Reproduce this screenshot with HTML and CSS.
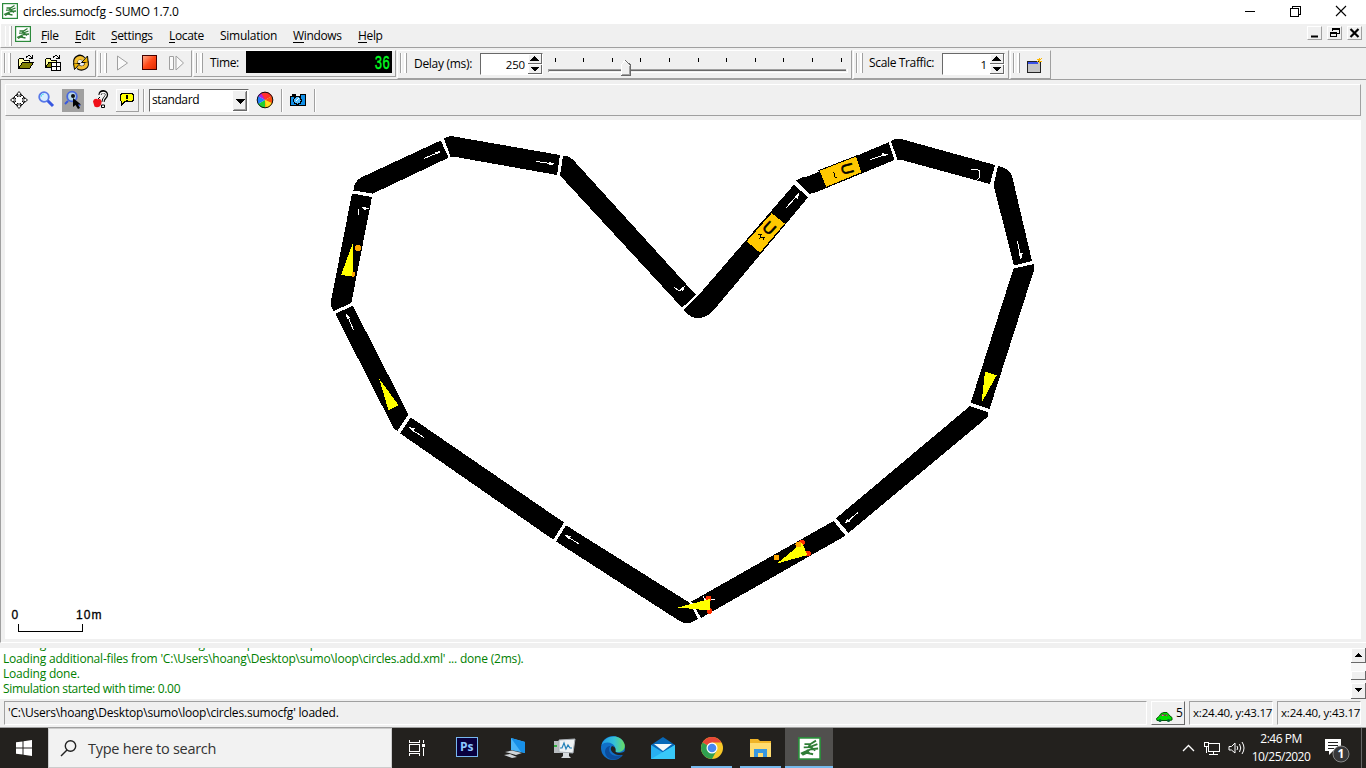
FILE: index.html
```html
<!DOCTYPE html>
<html lang="en">
<head>
<meta charset="utf-8">
<title>circles.sumocfg - SUMO 1.7.0</title>
<link rel="stylesheet" href="styles.css">
</head>
<body>
<svg class="defs" width="0" height="0">
  <symbol id="sumo" viewBox="0 0 16 16">
    <rect x=".6" y=".6" width="14.8" height="14.8" fill="#fff" stroke="#2c8a3c" stroke-width="1.2"/>
    <path d="M12.500 2.500 8.500 5H4.500M13.500 5 8 7 4 7.200M8.500 5 7 7.500M14 8 9 8.500 2 11.500M9 7 12 9.500M3 12.500 6 11 10.500 12M6 9 8 11.500" fill="none" stroke="#2f7d36" stroke-width="1.300"/>
  </symbol>
</svg>

<header class="titlebar">
  <svg class="app-icon" width="16" height="16"><use href="#sumo"/></svg>
  <span class="t title">circles.sumocfg - SUMO 1.7.0</span>
  <svg class="window-buttons" width="110" height="12" fill="none" stroke="#000" shape-rendering="crispEdges">
    <path d="M1 6.500H11M46.500 3.500H54.500V11.500H46.500ZM48.500 3V1.500H56.500V9.500H55"/>
    <path d="M92 1 102 11M102 1 92 11" shape-rendering="auto" stroke-width="1.100"/>
  </svg>
</header>

<nav class="menubar">
  <i class="grip"></i>
  <svg class="app-icon" width="16" height="16"><use href="#sumo"/></svg>
  <span class="t m-file"><u>F</u>ile</span>
  <span class="t m-edit"><u>E</u>dit</span>
  <span class="t m-settings"><u>S</u>ettings</span>
  <span class="t m-locate"><u>L</u>ocate</span>
  <span class="t m-simulation">Simulation</span>
  <span class="t m-windows"><u>W</u>indows</span>
  <span class="t m-help"><u>H</u>elp</span>
  <div class="mdi-buttons">
    <svg width="15" height="14"><path d="M3 9.500H10" stroke="#000" stroke-width="2"/></svg>
    <svg width="15" height="14" fill="none" stroke="#000" shape-rendering="crispEdges"><path d="M2.500 5.500H8.500V9.500H2.500ZM2 6.500H9M4.500 4V1.500H11.500V6.500H9M4 2.500H12"/></svg>
    <svg width="15" height="14"><path d="M2.500 2 10.500 10M10.500 2 2.500 10" stroke="#000" stroke-width="2.200"/></svg>
  </div>
</nav>

<div class="toolbars">
  <section class="bar bar-file">
    <i class="grip"></i>
    <svg width="18" height="18" class="ic1" shape-rendering="crispEdges">
      <path d="M1.500 14.500V5.500L3 4.500H6L7.500 6.500H12.500V8.500" fill="#ffffa0" stroke="#000"/><path d="M1.500 14.500 5.500 8.500H16.500L12.500 14.500Z" fill="#808000" stroke="#000"/><path d="M9 3.500C11 1 13 1 14.500 4M15 1V4.500H12" fill="none" stroke="#000"/>
    </svg>
    <svg width="18" height="18" class="ic2" shape-rendering="crispEdges">
      <path d="M1.500 13.500V5.500L3 4.500H6L7.500 6.500H12.500V8.500" fill="#ffffa0" stroke="#000"/><path d="M1.500 13.500 5 8.500H14L11 13.500Z" fill="#808000" stroke="#000"/><path d="M9 3.500C11 1 13 1 14.500 4M15 1V4.500H12" fill="none" stroke="#000"/><path d="M7.500 8.500H16.500V16.500H7.500ZM7.500 12.500H16.500M12.500 8.500V16.500" fill="#fff" stroke="#000"/>
    </svg>
    <svg width="18" height="18" class="ic3">
      <path d="M4 10C2 4 8 1 11.500 5M14 8c2 5-4 8-8 5" fill="none" stroke="#000" stroke-width="4.800"/><path d="M9.500 8.500H16.200L15.500 2ZM8 9.500H1.500L2.500 15.500Z" fill="#f0b400" stroke="#000"/><path d="M4 9.500C3 4.500 8 2 11.500 5.200M14 8.500c1.500 4.500-4 7-8 4.200" fill="none" stroke="#f5c030" stroke-width="3.300"/>
    </svg>
  </section>
  <section class="bar bar-run">
    <i class="grip"></i>
    <svg width="80" height="18" fill="none" stroke="#a0a0a0">
      <path d="M6.500 2V16L16.500 9ZM58.500 2.500H62.500V15.500H58.500ZM65 2V16L72.500 9Z" fill="#fafafa"/>
      <defs><linearGradient id="stop" x2="1" y2="1"><stop stop-color="#ffb090"/><stop offset=".5" stop-color="#ff4818"/><stop offset="1" stop-color="#e02800"/></linearGradient></defs>
      <rect x="31.500" y="1.500" width="14" height="14" fill="url(#stop)" stroke="#400"/>
    </svg>
  </section>
  <section class="bar bar-time">
    <i class="grip"></i><span class="t l-time">Time:</span>
    <svg class="lcd" width="146" height="22"><text x="128.500" y="17.500" textLength="15.500" lengthAdjust="spacingAndGlyphs">36</text></svg>
  </section>
  <section class="bar bar-delay tall">
    <i class="grip"></i><span class="t l-delay">Delay (ms):</span>
    <div class="spinner s-delay"><span class="t">250</span><svg width="14" height="20"><use href="#spin"/></svg></div>
    <svg class="slider" width="300" height="24" shape-rendering="crispEdges">
      <path d="M7.500 3V7M35.500 3V7M64.500 3V7M92.500 3V7M121.500 3V7M150.500 3V7M178.500 3V7M207.500 3V7M235.500 3V7M264.500 3V7M293.500 3V7" stroke="#000"/>
      <path d="M0 16.500V14.500H298" stroke="#a0a0a0" fill="none"/><path d="M1 15.500H298" stroke="#696969"/><path d="M1 17.500H299V14" stroke="#fff" fill="none"/>
      <path d="M73.500 20.500V9.500L77 5.500 82.500 10.500V20.500Z" fill="#f0f0f0" stroke="#fff"/><path d="M73 20.500H82.500V10L77 5" fill="none" stroke="#696969"/><path d="M74 19.500H81.500V11" fill="none" stroke="#a0a0a0"/>
    </svg>
  </section>
  <section class="bar bar-scale tall">
    <i class="grip"></i><span class="t l-scale">Scale Traffic:</span>
    <div class="spinner s-scale"><span class="t">1</span><svg width="14" height="20">
      <g id="spin" shape-rendering="crispEdges"><rect width="14" height="20" fill="#f0f0f0"/><path d="M0 9.500H13.500V0M0 19.500H13.500V11" stroke="#696969" fill="none"/><path d="M.5 9V.5H13M.5 19V10.500H13" stroke="#fff" fill="none"/><path d="M2 6.500 6.500 2 11 6.500ZM2 13 6.500 17.500 11 13Z"/></g></svg></div>
  </section>
  <section class="bar bar-view tall">
    <i class="grip"></i>
    <svg width="18" height="18" shape-rendering="crispEdges"><rect x="1.500" y="4.500" width="13" height="11" fill="#c4c4c4" stroke="#222"/><path d="M2 6H12" stroke="#3850e8" stroke-width="2"/><path d="M11 5 16 1M13.500 1V6M11 2 16 5" stroke="#ffb800"/></svg>
  </section>
</div>

<main class="mdi">
  <div class="viewbar">
    <svg width="20" height="20" class="v1" viewBox="0 0 20 20"><path d="M10 1.500 12.500 4.500H11V7L13 5 15 7 13 9H15.500V7.500L18.500 10 15.500 12.500V11H13L15 13 13 15 11 13V15.500H12.500L10 18.500 7.500 15.500H9V13L7 15 5 13 7 11H4.500V12.500L1.500 10 4.500 7.500V9H7L5 7 7 5 9 7V4.500H7.500Z" fill="#fff" stroke="#000" stroke-width=".9"/></svg>
    <svg width="20" height="20" class="v2"><path d="M10 10 16 16" stroke="#3858e0" stroke-width="3"/><circle cx="7" cy="7" r="4.800" fill="#d8ecff" stroke="#5878e8" stroke-width="1.800"/><path d="M4 7A3 3 0 0 1 7 4" stroke="#55dff0" fill="none"/></svg>
    <svg width="22" height="23" class="v3"><rect width="22" height="23" fill="#a0a0a0"/><path d="M6 12 3 15M14 13 18 17" stroke="#3858e0" stroke-width="2"/><circle cx="10" cy="7.500" r="4.800" fill="#b8d8e8" stroke="#4868e0" stroke-width="1.800"/><circle cx="11" cy="7" r="2" fill="#111"/><path d="M11 9V18L13.500 16 16 20 18 19 16 15.500H19Z"/></svg>
    <svg width="20" height="20" class="v4"><path d="M8 5C8 0 15 1 14.500 5 14.500 8 11 8 11 12" fill="none" stroke="#000" stroke-width="3.200"/><path d="M8 5C8.500 1.500 14.500 1.500 14.200 5 13.500 8 11 8 11 12" fill="none" stroke="#fff" stroke-width="1.200"/><path d="M1 11.500C2 8 5 8.500 6 9.500 8 8 10 10 9.500 13 9 17 5 18 2.500 16.500Z" fill="#f01018"/><path d="M6 9 8 7M9.500 15H12.500V17.500H9.500Z" stroke="#000" fill="#fff"/></svg>
    <svg width="23" height="23" class="v5" shape-rendering="crispEdges"><path d="M.5 22V.5H22" fill="none" stroke="#fff"/><path d="M0 22.500H22.500V0" fill="none" stroke="#a0a0a0"/><path d="M6 4.500H16L17.500 6V11L16 12.500H9L5.500 16V12.500L4.500 11V6Z" fill="#ff0" stroke="#000"/><path d="M11 6V9.500M11 10.500V12" stroke="#000" stroke-width="2"/></svg>
    <i class="sep"></i>
    <div class="combo"><span class="t">standard</span><svg width="14" height="20" shape-rendering="crispEdges"><rect width="14" height="20" fill="#f0f0f0"/><path d="M0 19.500H13.500V0" fill="none" stroke="#696969"/><path d="M1 18.500H12.500V1" fill="none" stroke="#a0a0a0"/><path d="M2 8H12L7 13Z"/></svg></div>
    <svg width="18" height="18" class="wheel" viewBox="-9 -9 18 18"><path d="M0 0V-8A8 8 0 0 1 7 -4Z" fill="#ff3020"/><path d="M0 0 7-4A8 8 0 0 1 7 4Z" fill="#f85010"/><path d="M0 0 7 4A8 8 0 0 1 0 8Z" fill="#ffb010"/><path d="M0 0V8A8 8 0 0 1-7 4Z" fill="#20d030"/><path d="M0 0-7 4A8 8 0 0 1-7-4Z" fill="#2080ff"/><path d="M0 0-7-4A8 8 0 0 1 0-8Z" fill="#b020e0"/><path d="M0 0-4-7A8 8 0 0 1 4-7Z" fill="#ff3030"/><path d="M0 0 7 3A8 8 0 0 1 2 8Z" fill="#ffe020"/><circle r="7.800" fill="none" stroke="#111"/></svg>
    <i class="sep s2"></i>
    <svg width="18" height="16" class="camera" shape-rendering="crispEdges"><path d="M1.500 4.500H11.500V2.500H16.500V13.500H1.500Z" fill="#1090e8" stroke="#000"/><rect x="3" y="2" width="4" height="2"/><circle cx="8.500" cy="8.500" r="3.800" fill="#58c0ff" stroke="#000" stroke-width="1.300"/><path d="M7 9 10 6" stroke="#fff"/></svg>
    <i class="sep s3"></i>
  </div>
  <svg class="canvas" width="1356" height="519" viewBox="5 120 1356 519" shape-rendering="crispEdges">
    <g class="roads">
      <path d="M352 193.500 372 197 351.300 303 333.700 311 330.500 305 331 301Z"/>
      <path d="M353.500 190.500 354.500 185 357.500 180 361.500 177.300 440.700 140.500 448.500 157.700 372.700 193.700Z"/>
      <path d="M444 138.500 449.500 136.200 454 136.500 560 155 557 175 454 156.700 450.700 157.500Z"/>
      <path d="M563 156H567.500L572.700 159.300 696 295 682 307.700 560 175.500Z"/>
      <path d="M697 297 794 184.500 808 197.500 713 311Q697 326 683.300 310Z"/>
      <path d="M795.700 180.700 801.500 177.500 807 176.700 888.500 142.300 894.500 160 815 192.700 809 194Z"/>
      <path d="M890.700 141 895 139 903 139.500 995 165 990 184 900 159.500 897.500 159.500Z"/>
      <path d="M998 166Q1011 168 1013 180L1032 261 1014 265.500 993.500 185Z"/>
      <path d="M1034 264 1034.500 268.500 989.500 409 970.700 402.700 1013.500 268.500Z"/>
      <path d="M970 406 988.500 412.500 987.500 417 848.500 533 836 518.300Z"/>
      <path d="M833.500 521 845.500 535.700 701 618 691.500 601.500Z"/>
      <path d="M690 603 698 618.500Q688 627 678 620L556 541.500 566 525.300Z"/>
      <path d="M410.700 417.300 564 522.500 553.300 539.700 400 433.300Z"/>
      <path d="M335.300 314 352.700 305.500 408.500 414.500 397.700 430.700 394 429Z"/>
    </g>
    <g class="heads">
      <path d="M434.500 152.500 439 151 441 151.700 437 154Z"/>
      <path d="M549 162 555 164 549 165.500Z"/>
      <path d="M362 207.500 364 206.800 369 208.500 364 210Z"/>
      <path d="M680 289 685 286 683 291Z"/>
      <path d="M794 197 799 193 798 199Z"/>
      <path d="M882 153 888 154.500 883 156.500Z"/>
      <path d="M1018.500 253 1022.500 253.500 1021 260Z"/>
      <path d="M845 523 847 519 851 521Z"/>
      <path d="M564 535 571 536 569 539.500Z"/>
      <path d="M409 427 415 428.500 413 432Z"/>
      <path d="M345.500 313 350 317.500 347 319.500Z"/>
    </g>
    <g class="shafts">
      <path d="M424 158.500 436 153.500M536 161.500 550 163.500M358.500 215V208.500M674 287 679 291 682 289M786 208 796 197M870 159.500 883 155.500M971 169.500H977.500L980 171 979 178 977 180M1017.500 241 1020 254M848 521 858 512.500M579 544 568 537M424 437.500 412 430M353.500 330 348.500 318M703 596 705 600 715 599"/>
    </g>
    <g class="stops">
      <path d="M771.700 212.500 785.300 223.500 760 253.300 746 241.500Z"/>
      <path d="M819 170.500 856.500 156 862 172.500 826 187.500Z"/>
      <text transform="translate(765.500 232) rotate(42)" text-anchor="middle">U</text>
      <text transform="translate(842 170) rotate(76)" text-anchor="middle">U</text>
      <path class="mark" d="M758 235 761 234.500 760 238 764 237.500 763 240M833 172 835 174 834 176 836.500 178"/>
    </g>
    <g fill="#ff3000"><circle cx="802" cy="542.500" r="3"/><circle cx="808" cy="553.500" r="3"/><circle cx="708.500" cy="598.500" r="3"/><circle cx="709.500" cy="611" r="3"/></g>
    <g fill="#ff0"><path d="M352.500 244V276.500L341 275ZM379.300 379 398.500 405 388.500 410.500ZM985 371.500 996.500 375.500 981.500 403ZM777 563.500 802 543 807.500 555ZM678 607.500 709.500 599V610.500Z"/></g>
    <g fill="#ffa800"><circle cx="358" cy="248" r="3"/><path d="M352 271.500 355 272V276L352 277Z"/><circle cx="776.500" cy="557.500" r="2.800"/><circle cx="798.500" cy="544.500" r="3"/></g>
    <path d="M18.500 624V631.500H82.500V624" fill="none" stroke="#000"/>
    <text class="scale" x="11.500" y="619">0</text><text class="scale" x="76" y="619" textLength="25.500">10m</text>
  </svg>
</main>

<section class="log">
  <div class="log-text">
    <p class="t l0">Loading net-file from 'C:\Users\hoang\Desktop\sumo\loop\'</p>
    <p class="t l1">Loading additional-files from 'C:\Users\hoang\Desktop\sumo\loop\circles.add.xml' ... done (2ms).</p>
    <p class="t">Loading done.</p>
    <p class="t l3">Simulation started with time: 0.00</p>
  </div>
  <svg width="15" height="51" shape-rendering="crispEdges"><rect width="15" height="51" fill="#f7f7f7"/><g fill="#f0f0f0" stroke="#fff"><path d="M.5.500H14.500V14.500H.5ZM.5 23.500H14.500V31.500H.5ZM.5 35.500H14.500V50.500H.5Z"/></g><path d="M0 14.500H14.500V0M0 31.500H14.500V23M0 50.500H14.500V35" fill="none" stroke="#696969"/><path d="M3 9 7 5 11 9ZM3 40H11L7 44Z"/></svg>
</section>

<footer class="status">
  <div class="field"><span class="t l-status">'C:\Users\hoang\Desktop\sumo\loop\circles.sumocfg' loaded.</span></div>
  <div class="cars"><svg width="17" height="12"><path d="M.5 7.500 3 5.500 5 2.500 8 1.500H11L14 5 16 6.500V9L13 9.500H1Z" fill="#00e000" stroke="#005800"/><path d="M5 5 6.500 3.500H8V5M9.500 5V3.500L12 5" fill="#f070a0" stroke="#702040" stroke-width=".7"/><circle cx="4" cy="9.500" r="1.500" fill="#063"/><circle cx="12.500" cy="9.500" r="1.500" fill="#063"/></svg><span class="t">5</span></div>
  <div class="coord"><span class="t l-coord">x:24.40, y:43.17</span></div>
  <div class="coord c2"><span class="t l-coord">x:24.40, y:43.17</span></div>
</footer>

<footer class="taskbar">
  <div class="start"><svg width="16" height="16" fill="#fff"><path d="M0 2.300 6.500 1.400V7.500H0ZM7.500 1.200 16 0V7.500H7.500ZM0 8.500H6.500V14.600L0 13.700ZM7.500 8.500H16V16L7.500 14.800Z"/></svg></div>
  <div class="search"><svg width="17" height="17" fill="none" stroke="#222" stroke-width="1.400"><circle cx="10.500" cy="6" r="5.200"/><path d="M7 10 1 16"/></svg><span>Type here to search</span></div>
  <div class="task"><svg width="18" height="16" fill="none" stroke="#fff" shape-rendering="crispEdges"><path d="M1.500 0V2.500H11.500V0M1.500 4.500H11.500V11.500H1.500ZM1.500 16V13.500H11.500V16M15.500 0V3M15.500 8V16"/><rect x="14" y="4" width="3" height="3" fill="#fff" stroke="none"/></svg></div>
  <div class="task"><div class="ps">Ps</div></div>
  <div class="task"><svg width="26" height="24"><path d="M9 2 23 6V17L9 14Z" fill="#48b4f8"/><path d="M9 2 23 6V17L19 16Z" fill="#1890e8"/><path d="M3 16 10 14.500 20 17 14 19ZM2 19 8 18 15 21 10 22Z" fill="#d0d4d8"/></svg></div>
  <div class="task"><svg width="26" height="24"><path d="M3 5H18V17H3Z" fill="#b8bcc0"/><path d="M8 4 24 3 22 17 8 16Z" fill="#eef2f4" stroke="#a8aeb4"/><path d="M9 12H11L13 7 15 13 17 9 19 12H21" fill="none" stroke="#2080b8" stroke-width="1.200"/><path d="M12 17H18V20L20 22H10L12 20Z" fill="#d8dcdf"/><path d="M3 9H6V11H3Z" fill="#30b040"/></svg></div>
  <div class="task"><svg width="26" height="26" viewBox="0 0 26 26"><defs><linearGradient id="edge" x2="1"><stop stop-color="#1f9be8"/><stop offset=".55" stop-color="#35c1d8"/><stop offset="1" stop-color="#68dc60"/></linearGradient></defs><circle cx="13" cy="13" r="12" fill="#1070c8"/><path d="M1.500 10C4 1 20-3 24.500 9 26 15 21 18 16 17 13 16 16 15 15 12 13 7 5 6 1.500 10Z" fill="url(#edge)"/><path d="M10 11C7 17 12 23 22 20 18 27 6 26 5 17 5 13 8 11 10 11Z" fill="#0c4d9c"/><path d="M12 11C9 14 12 19 18 20H24L25 16C21 19 16 18 15.500 16.500 16 15 16 12 12 11Z" fill="#23221f"/></svg></div>
  <div class="task"><svg width="26" height="24"><path d="M1 9 13 1 25 9V23H1Z" fill="#0868b8"/><path d="M1 9 13 16.500 25 9V23H1Z" fill="#28b0f0"/><path d="M1 23 25 9V23Z" fill="#38c8f8"/><path d="M4 8H22L13 15Z" fill="#f4f8fa"/></svg></div>
  <div class="task chrome"><svg width="24" height="24" viewBox="-12 -12 24 24"><circle r="11" fill="#f8c828"/><path d="M0 0-9.500-5.500A11 11 0 0 1 9.500-5.500H0Z" fill="#e84838"/><path d="M0 0-9.500-5.500A11 11 0 0 0 0 11L5 2Z" fill="#30a050"/><circle r="5.500" fill="#fff"/><circle r="4.300" fill="#4888f0"/></svg></div>
  <div class="task folder"><svg width="24" height="22"><path d="M1 2H9L11 4H22V20H1Z" fill="#f0b428"/><path d="M1 6H22V20H1Z" fill="#ffdc70"/><path d="M5 20V12H18V20H14V16H9V20Z" fill="#3898e0"/></svg></div>
  <div class="task active"><svg width="23" height="23" viewBox="0 0 16 16"><use href="#sumo"/></svg></div>
  <svg class="tray" width="66" height="18" fill="none" stroke="#fff"><path d="M3 12 8.500 6.500 14 12" stroke-width="1.300"/><path d="M27.500 4.500H39.500V12.500H28.500V8M33.500 12V15.500M29 15.500H38M24.500 3.500H28.500V7.500H24.500ZM26.500 8V14" shape-rendering="crispEdges"/><path d="M49 7.500H51.500L55 4V14L51.500 11H49ZM57 7Q58.500 9 57 11M59.500 5Q62 9 59.500 13M62 3Q66 9 62 15"/></svg>
  <div class="clock"><span>2:46 PM</span><span>10/25/2020</span></div>
  <svg class="notice" width="28" height="28"><path d="M1 2H17V14H9L5 18V14H1Z" fill="#fff"/><path d="M4 5.500H14M4 8.500H14M4 11.500H10" stroke="#222"/><circle cx="17" cy="17" r="8" fill="#38383a" stroke="#888"/><text x="17" y="21">1</text></svg>
  <i class="show-desktop"></i>
</footer>
</body>
</html>
```
FILE: styles.css
```css
* { box-sizing: border-box; }
body { margin: 0; width: 1366px; height: 768px; overflow: hidden; background: #f0f0f0; color: #000; font: 12px/15px "Open Sans", "Noto Sans", sans-serif; }
.defs { position: absolute; }
svg { display: block; flex: none; }
.t { display: block; white-space: nowrap; letter-spacing: -0.2px; }
u { display: inline-block; line-height: 12px; border-bottom: 1px solid #000; text-decoration: none; }

.titlebar { display: flex; height: 24px; background: #fff; padding: 3px 0 0 2px; }
.title { margin: 1px 0 0 5px; }
.window-buttons { margin: 2px 12px 0 auto; }

.menubar { display: flex; height: 24px; padding-left: 4px; border-left: 1px solid #fff; border-bottom: 1px solid #a0a0a0; }
.grip { flex: none; width: 7px; height: 20px; border: solid #a0a0a0; border-width: 0 1px; box-shadow: inset 1px 0 #fff, inset -2px 0 #fff; }
.menubar .grip { margin-top: 2px; border-left: 0; }
.menubar .app-icon { margin: 2px 0 0 3px; }
.menubar .t { margin-top: 4px; letter-spacing: -0.35px; }
.menubar .m-simulation { letter-spacing: -0.25px; }
.m-file { width: 34px; margin-left: 10px; }
.m-edit { width: 36px; }
.m-settings { width: 58px; }
.m-locate { width: 51px; }
.m-simulation { width: 73px; }
.m-windows { width: 65px; }
.mdi-buttons { display: flex; gap: 5px; margin: 2px 4px 0 auto; }
.mdi-buttons svg { border: solid; border-width: 1px; border-color: #fff #a0a0a0 #a0a0a0 #fff; }

.toolbars { display: flex; height: 31px; padding: 2px 0 0 1px; }
.bar { display: flex; height: 27px; margin-right: 1px; padding: 0 0 0 2px; border: solid; border-width: 1px; border-color: #fff #a0a0a0 #a0a0a0 #fff; }
.bar.tall { height: 29px; }
.bar .grip { margin-top: 2px; }
.bar .t { margin-top: 4px; }
.bar-file { width: 95px; }
.ic1 { margin: 3px 0 0 6px; }
.ic2 { margin: 3px 0 0 9px; }
.ic3 { margin: 3px 0 0 10px; }
.bar-run { width: 95px; }
.bar-run svg:last-child { margin: 3px 0 0 4px; }
.bar-time { width: 203px; }
.l-time { width: 36px; margin-left: 7px; letter-spacing: -0.35px; }
.lcd { overflow: visible; background: #000; }
.lcd text { font: 21px "Liberation Mono", monospace; fill: #00ff20; stroke: #00ff20; stroke-width: .4px; }
.bar-delay { width: 455px; }
.l-delay { width: 66px; margin-left: 7px; letter-spacing: -0.3px; }
.bar-delay .t { margin-top: 5px; }
.spinner { display: flex; justify-content: flex-end; width: 63px; height: 22px; margin-top: 2px; background: #fff; border: solid; border-width: 1px; border-color: #696969 #fff #fff #696969; }
.bar .spinner .t { margin: 3px 3px 0 0; font-size: 11.5px; }
.slider { margin: 4px 0 0 5px; }
.bar-scale { width: 156px; }
.l-scale { width: 73px; margin-left: 6px; letter-spacing: -0.35px; }
.bar-view { width: 41px; }
.bar-view svg { margin: 6px 0 0 6px; }

.mdi { height: 564px; padding: 4px 5px 0 4px; border-left: 1px solid #a0a0a0; border-top: 1px solid #a0a0a0; border-bottom: 1px solid #fff; }
.viewbar { display: flex; align-items: center; height: 32px; padding-left: 3px; border: solid; border-width: 1px; border-color: #fff #a0a0a0 #a0a0a0 #fff; }
.v2 { margin-left: 8px; }
.v3 { margin-left: 5px; }
.v4 { margin-left: 8px; }
.v5 { margin-left: 4px; }
.sep { flex: none; width: 2px; height: 23px; margin-left: 4px; border-left: 1px solid #a0a0a0; border-right: 1px solid #fff; }
.combo { display: flex; justify-content: space-between; width: 100px; height: 23px; margin-left: 4px; padding: 1px; background: #fff; border: solid; border-width: 1px; border-color: #696969 #fff #fff #696969; }
.combo .t { margin: 1px 0 0 1px; letter-spacing: -0.4px; }
.wheel { margin-left: 7px; }
.s2 { margin-left: 7px; }
.camera { margin-left: 6px; }
.s3 { margin-left: 7px; }
.canvas { margin-top: 4px; background: #fff; }
.heads { fill: #fff; }
.shafts { fill: none; stroke: #fff; }
.stops path { fill: #ffc800; stroke: #000; }
.stops .mark { fill: none; }
.stops text { font: 16px "Liberation Sans", sans-serif; stroke: #000; stroke-width: .6px; }
.scale { font: 12px "Liberation Sans", sans-serif; stroke: #000; stroke-width: .3px; }

.log { display: flex; justify-content: space-between; height: 56px; padding-top: 5px; }
.log-text { flex: 1; height: 51px; padding-left: 3px; overflow: hidden; background: #fff; color: #008000; }
.log p { margin: 0; }
.log .l0 { margin-top: -12px; }
.log .l3 { letter-spacing: -0.32px; }

.status { display: flex; height: 29px; padding: 2px 5px 0 4px; border-bottom: 1px solid #a0a0a0; }
.field, .coord { height: 24px; padding: 3px 0 0 3px; border: solid; border-width: 1px; border-color: #a0a0a0 #fff #fff #a0a0a0; }
.field { width: 1144px; }
.cars { display: flex; width: 34px; height: 24px; margin-left: 4px; border: solid; border-width: 1px; border-color: #fff #696969 #696969 #fff; }
.cars svg { margin: 9px 0 0 4px; }
.cars .t { margin: 3px 0 0 3px; }
.coord { width: 84px; margin-left: 4px; padding-left: 3px; }
.coord .t { font-size: 11.5px; }

.taskbar { display: flex; height: 40px; background: #23211e; color: #fff; }
.start { width: 48px; padding: 12px 0 0 16px; }
.search { display: flex; width: 344px; padding: 11px 0 0 11px; background: #f2f2f2; border: 1px solid #ccc; color: #333; }
.search span { margin-left: 11px; font-size: 14.5px; line-height: 17px; letter-spacing: -0.28px; white-space: nowrap; }
.task { display: flex; flex: none; align-items: center; justify-content: center; width: 49.2px; }
.ps { width: 22px; height: 20px; margin: 0 0 2px 2px; background: #09003f; border: 1.5px solid #78b8f0; color: #8cc8ff; font: bold 12px/17px "Open Sans", sans-serif; text-align: center; }
.chrome, .folder, .active { box-shadow: inset 0 -2px #76b9ed; }
.chrome, .folder { width: 41px; margin: 0 4px; }
.active { width: 48px; background: #51504e; }
.tray { margin: 11px 0 0 auto; }
.clock { display: flex; flex-direction: column; align-items: center; width: 70px; padding-top: 2px; font-size: 12px; line-height: 18px; letter-spacing: -0.5px; }
.notice { margin: 9px 9px 0 8px; }
.notice text { font: bold 12px "Open Sans", sans-serif; text-anchor: middle; fill: #fff; }
.show-desktop { width: 5px; border-left: 1px solid #666; }
```
